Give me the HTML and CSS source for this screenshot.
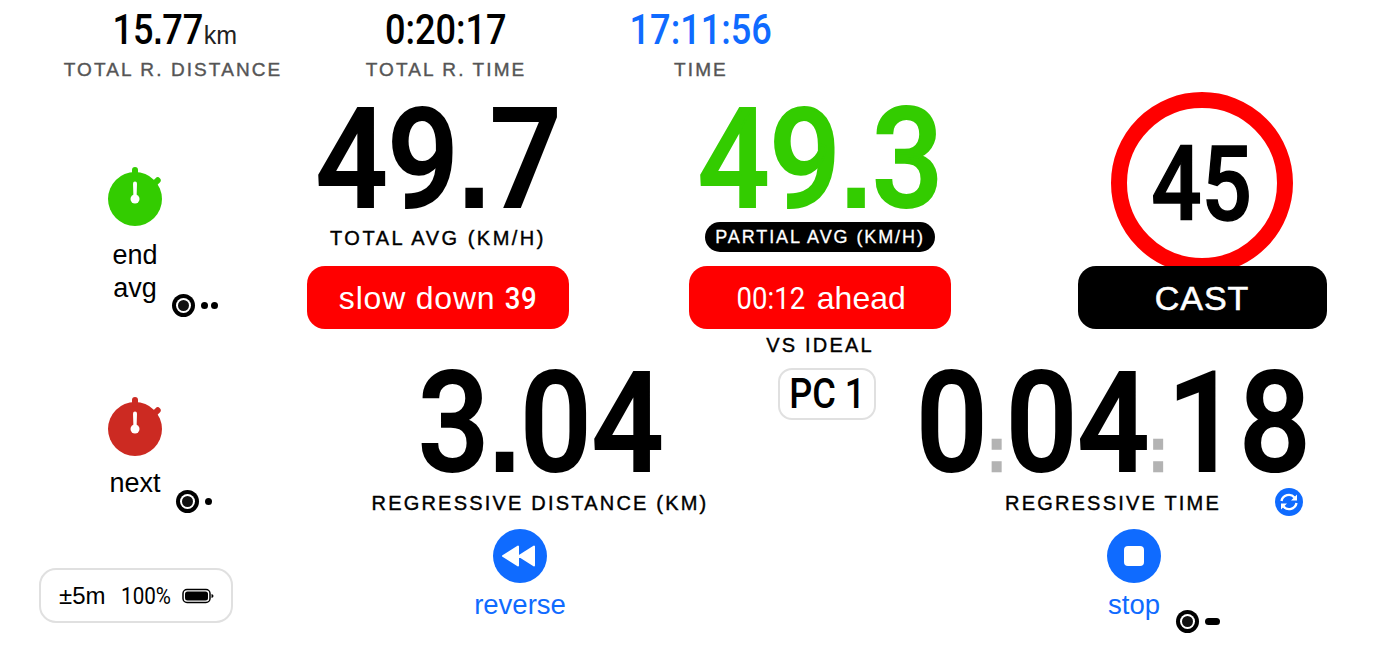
FILE: index.html
```html
<html>
    <head>
        <meta charset="UTF-8">
        <title>Rally</title>
        <link rel="stylesheet" href="styles.css">
    </head>
    <body>
        <div id="top">
            <div class="stat stat-dist">
                <div class="stat-val"><span class="din">15<b>.</b>77</span><span class="unit">km</span></div>
                <div class="stat-label">TOTAL R. DISTANCE</div>
            </div>
            <div class="stat stat-time">
                <div class="stat-val"><span class="din">0:20:17</span></div>
                <div class="stat-label">TOTAL R. TIME</div>
            </div>
            <div class="stat stat-clock">
                <div class="stat-val blue"><span class="din">17:11:56</span></div>
                <div class="stat-label">TIME</div>
            </div>
        </div>
        <div id="main">
            <div id="side">
                <div class="lap lap-end">
                    <svg class="watch" width="60" height="62" viewBox="0 0 60 62">
                        <g fill="#33cc00">
                            <circle cx="30" cy="33" r="27"/>
                            <rect x="27" y="1" width="6" height="10" rx="3"/>
                            <rect x="49" y="11" width="6" height="9" rx="3" transform="rotate(45 52 15)"/>
                        </g>
                        <path d="M28 17.5a2 2 0 0 1 4 0L31.5 33h-3z" fill="#fff"/>
                        <circle cx="30" cy="33" r="4.5" fill="#fff"/>
                    </svg>
                    <div class="lap-text">end<br>avg</div>
                    <div class="hint hint-end">
                        <span class="knob"></span><span class="dot"></span><span class="dot"></span>
                    </div>
                </div>
                <div class="lap lap-next">
                    <svg class="watch" width="60" height="62" viewBox="0 0 60 62">
                        <g fill="#cc2a22">
                            <circle cx="30" cy="33" r="27"/>
                            <rect x="27" y="1" width="6" height="10" rx="3"/>
                            <rect x="49" y="11" width="6" height="9" rx="3" transform="rotate(45 52 15)"/>
                        </g>
                        <path d="M28 17.5a2 2 0 0 1 4 0L31.5 33h-3z" fill="#fff"/>
                        <circle cx="30" cy="33" r="4.5" fill="#fff"/>
                    </svg>
                    <div class="lap-text">next</div>
                    <div class="hint hint-next">
                        <span class="knob"></span><span class="dot"></span>
                    </div>
                </div>
                <div id="gps">
                    <span class="gps-acc">±5m</span>
                    <span class="din gps-pct">100%</span>
                    <svg width="32" height="16" viewBox="0 0 32 16">
                        <rect x="1" y="1.5" width="27" height="13" rx="4" fill="none" stroke="#000" stroke-width="1.5"/>
                        <rect x="3" y="3.5" width="23" height="9" rx="2.5" fill="#000"/>
                        <path d="M29.5 6 q2 .5 2 2 t-2 2z" fill="#000"/>
                    </svg>
                </div>
            </div>
            <div id="content">
                <div id="avgs">
                    <div class="avg">
                        <div class="big"><span class="din">49<b>.</b>7</span></div>
                        <div class="label avg-label">TOTAL AVG (KM/H)</div>
                        <div class="pill red slow">slow down <span class="din-b">39</span></div>
                    </div>
                    <div class="avg">
                        <div class="big green"><span class="din">49<b>.</b>3</span></div>
                        <div class="label avg-label"><span class="label-dark">PARTIAL AVG (KM/H)</span></div>
                        <div class="pill red"><span class="din-b">00:12</span> ahead</div>
                        <div class="label vs">VS IDEAL</div>
                    </div>
                    <div class="avg">
                        <div class="sign"><span class="din">45</span></div>
                        <div class="pill black">CAST</div>
                    </div>
                </div>
                <div id="regs">
                    <div class="reg reg-dist">
                        <div class="big"><span class="din">3<b>.</b>04</span></div>
                        <div class="label">REGRESSIVE DISTANCE (KM)</div>
                    </div>
                    <div id="pc"><span class="din">PC 1</span></div>
                    <div class="reg reg-time">
                        <div class="big"><span class="din">0<i>:</i>04<i>:</i>18</span></div>
                        <div class="label">REGRESSIVE TIME</div>
                        <svg class="sync" width="28" height="28" viewBox="0 0 28 28">
                            <circle cx="14" cy="14" r="14" fill="#0f6bff"/>
                            <path d="M6.5 13a7.5 7.5 0 0 1 13-3.5" fill="none" stroke="#fff" stroke-width="2.4"/>
                            <path d="M22 6.5v6h-6z" fill="#fff"/>
                            <path d="M21.5 15a7.5 7.5 0 0 1-13 3.5" fill="none" stroke="#fff" stroke-width="2.4"/>
                            <path d="M6 21.5v-6h6z" fill="#fff"/>
                        </svg>
                    </div>
                </div>
                <div id="actions">
                    <div class="action action-rev">
                        <svg width="54" height="54" viewBox="0 0 54 54">
                            <circle cx="27" cy="27" r="27" fill="#0f6bff"/>
                            <path d="M10 27 L25 17.5 V36.5Z M26 27 L41 17.5 V36.5Z" fill="#fff" stroke="#fff" stroke-width="2" stroke-linejoin="round"/>
                        </svg>
                        <div class="action-text">reverse</div>
                    </div>
                    <div class="action action-stop">
                        <svg width="54" height="54" viewBox="0 0 54 54">
                            <circle cx="27" cy="27" r="27" fill="#0f6bff"/>
                            <rect x="17" y="17" width="20" height="20" rx="4" fill="#fff"/>
                        </svg>
                        <div class="action-text">stop</div>
                        <div class="hint hint-stop">
                            <span class="knob"></span><span class="dash"></span>
                        </div>
                    </div>
                </div>
            </div>
        </div>
    </body>
</html>
```

FILE: styles.css
```css
html, body {
    margin: 0;
    padding: 0;
    background: #fff;
    color: #000;
    font-family: "Liberation Sans", Arial, sans-serif;
    overflow: hidden;
}
.din, .din-b {
    display: inline-block;
    font-family: Roboto, sans-serif;
    font-weight: 500;
    transform: scaleX(.86);
}
.din-b {
    font-weight: 400;
    margin: 0 -3px;
}
/* square period and colons, Roboto's are round */
.din b {
    font-family: "Liberation Sans", sans-serif;
    font-weight: 700;
    font-size: .88em;
}
.din i {
    font-family: "Liberation Sans", sans-serif;
    font-style: normal;
    font-weight: 700;
    font-size: 61px;
    color: #b3b3b3;
    -webkit-text-stroke: 2.5px #b3b3b3;
}
.blue {
    color: #0f6bff;
}
.green {
    color: #33cc00;
}

#top {
    display: flex;
    height: 92px;
}
.stat {
    text-align: center;
}
.stat-dist {
    width: 342px;
}
.stat-time {
    width: 208px;
}
.stat-clock {
    width: 302px;
}
.stat-val {
    height: 58px;
    line-height: 60px;
    font-size: 42px;
}
.unit {
    font-size: 25px;
    font-weight: normal;
    margin-left: -7px;
    color: #222;
}
.stat-label {
    font-size: 19px;
    line-height: 24px;
    letter-spacing: 2.1px;
    color: #555;
    -webkit-text-stroke: .4px #555;
}
.stat-dist .stat-label {
    margin-left: 4px;
}

#main {
    display: flex;
}
#side {
    width: 270px;
    flex: none;
}
.lap {
    position: relative;
    text-align: center;
}
.lap-end {
    height: 304px;
    padding-top: 74px;
    box-sizing: border-box;
}
.lap-next {
    height: 172px;
}
.watch {
    display: block;
    margin: 0 auto;
}
.lap-text {
    font-size: 27px;
    line-height: 33px;
    margin-top: 11px;
}
.lap-next .lap-text {
    margin-top: 9px;
}
.hint {
    position: absolute;
    display: flex;
    align-items: center;
    gap: 6px;
}
.hint-end {
    left: 172px;
    top: 202px;
}
.hint-next {
    left: 176px;
    top: 94px;
}
.hint-stop {
    left: 156px;
    top: 81px;
}
.knob {
    width: 11px;
    height: 11px;
    margin: 6px;
    border-radius: 50%;
    background: #111;
    box-shadow: 0 0 0 2px #fff, 0 0 0 6px #000;
}
.dot {
    width: 7px;
    height: 7px;
    border-radius: 50%;
    background: #000;
    margin-right: -3px;
}
.dash {
    width: 15px;
    height: 7px;
    border-radius: 4px;
    background: #000;
}
#gps {
    display: flex;
    align-items: center;
    width: 194px;
    height: 55px;
    margin-left: 39px;
    padding-left: 18px;
    box-sizing: border-box;
    border: 2px solid #e0e0e0;
    border-radius: 17px;
}
.gps-acc {
    font-size: 24px;
}
.gps-pct {
    font-size: 24px;
    font-weight: 400;
    margin: 0 7px 0 11px;
}

#content {
    flex: 1;
}
#avgs {
    display: grid;
    grid-template-columns: 336px 428px 336px;
    text-align: center;
    height: 268px;
}
.big {
    box-sizing: border-box;
    height: 126px;
    padding-top: 8px;
    line-height: 118px;
    font-size: 140px;
}
.big .din {
    -webkit-text-stroke: 2px currentColor;
    transform: scaleX(.9);
}
.label {
    font-size: 20px;
    line-height: 30px;
    letter-spacing: 2.2px;
    -webkit-text-stroke: .4px #000;
}
.avg-label {
    height: 30px;
    margin: 5px 0 13px;
    letter-spacing: 2.5px;
}
.label-dark {
    display: inline-block;
    margin-top: -1px;
    background: #000;
    color: #fff;
    border-radius: 15px;
    padding: 0 10px;
    font-size: 18px;
    letter-spacing: 1.9px;
    -webkit-text-stroke: .3px #fff;
}
.pill {
    margin: 0 auto;
    height: 63px;
    line-height: 65px;
    font-size: 32px;
    border-radius: 18px;
}
.red {
    width: 262px;
    background: #ff0000;
    color: #fff;
}
.slow {
    letter-spacing: .8px;
}
.slow .din-b {
    font-weight: 500;
}
.black {
    position: relative;
    width: 249px;
    margin-top: -8px;
    background: #000;
    color: #fff;
    letter-spacing: 1px;
    font-size: 34px;
    -webkit-text-stroke: .6px #fff;
}
.vs {
    line-height: 32px;
}
.sign {
    width: 182px;
    height: 182px;
    margin: 0 auto;
    box-sizing: border-box;
    border: 16px solid #ff0000;
    border-radius: 50%;
    line-height: 154px;
    font-size: 103px;
}
.sign .din {
    -webkit-text-stroke: 1.5px #000;
    transform: scaleX(.86);
}
#regs {
    display: flex;
    text-align: center;
}
.reg {
    position: relative;
}
.reg-dist {
    width: 476px;
    padding-left: 32px;
}
.reg-time {
    width: 474px;
}
#regs .big {
    height: 128px;
    padding-top: 4px;
}
#regs .label {
    line-height: 30px;
}
#pc {
    width: 98px;
    height: 52px;
    line-height: 48px;
    font-size: 42px;
    margin-top: 8px;
    box-sizing: border-box;
    border: 2px solid #e0e0e0;
    border-radius: 14px;
}
.sync {
    position: absolute;
    left: 399px;
    top: 128px;
}
#actions {
    display: flex;
    margin-top: 11px;
    text-align: center;
}
.action {
    position: relative;
}
.action svg {
    display: block;
    margin: 0 auto;
}
.action-rev {
    width: 500px;
}
.action-stop {
    width: 228px;
    margin-left: 250px;
}
.action-text {
    font-size: 27.5px;
    line-height: 44px;
    color: #0f6bff;
}
```
